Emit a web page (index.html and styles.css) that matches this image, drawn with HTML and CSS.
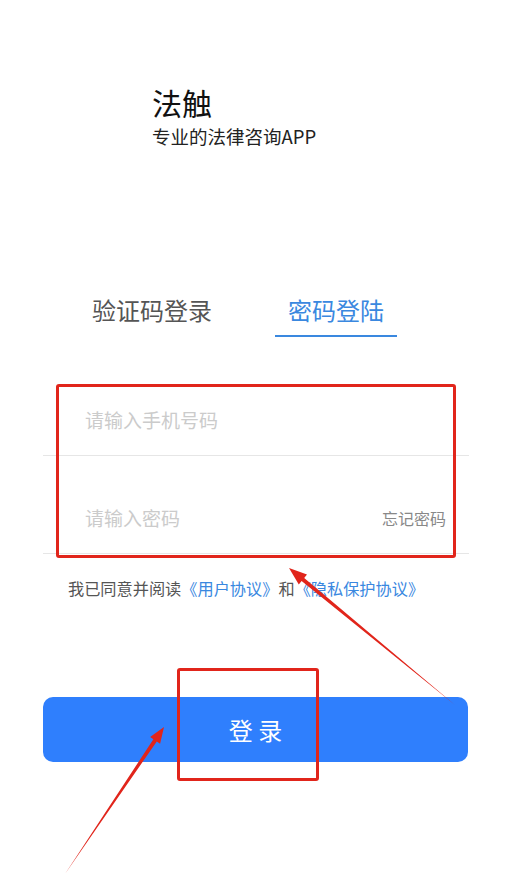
FILE: index.html
```html
<!DOCTYPE html>
<html>

<head>
  <meta charset="utf-8">
  <link rel="stylesheet" href="styles.css">
</head>

<body>
  <div class="screen">
    <header class="brand">
      <h1 class="brand-name">法触</h1>
      <p class="brand-slogan">专业的法律咨询APP</p>
    </header>

    <nav class="tabs">
      <span class="tab">验证码登录</span>
      <span class="tab active">密码登陆</span>
    </nav>

    <form class="login-form">
      <div class="field">
        <input class="field-input" type="tel" placeholder="请输入手机号码">
      </div>
      <div class="field">
        <input class="field-input" type="password" placeholder="请输入密码">
        <a class="forgot">忘记密码</a>
      </div>
    </form>

    <p class="agreement">我已同意并阅读<a class="link">《用户协议》</a>和<a class="link">《隐私保护协议》</a></p>

    <button class="submit" type="button">登 录</button>

    <!-- annotation marks drawn over the screenshot -->
    <div class="mark mark-fields"></div>
    <div class="mark mark-button"></div>
    <svg class="arrows" xmlns="http://www.w3.org/2000/svg" width="514" height="896">
      <polygon points="65,874 156.8,741.4 160.1,743.7 164,727 150.1,736.9 153.4,739.2" />
      <polygon points="455,705 304.2,578 307,574.5 289,568 298.8,584.5 301.6,581" />
    </svg>
  </div>
</body>

</html>
```

FILE: styles.css
```css
body {
  margin: 0;
  background-color: #fff;
  font-family: "Noto Sans CJK SC", "Noto Sans", sans-serif;
}

.screen {
  position: relative;
  width: 514px;
  height: 896px;
  overflow: hidden;
  padding: 0 45px 0 43px;
  box-sizing: border-box;
}

.brand {
  padding: 84px 0 0 109px;
}

.brand-name {
  margin: 0;
  font-size: 30px;
  line-height: 36px;
  font-weight: 400;
  color: #111;
}

.brand-slogan {
  margin: 5px 0 0;
  font-size: 18.5px;
  line-height: 22px;
  color: #222;
}

.tabs {
  display: flex;
  gap: 62px;
  margin-top: 147px;
  padding-left: 48px;
}

.tab {
  width: 122px;
  padding-bottom: 9px;
  border-bottom: 2px solid transparent;
  text-align: center;
  font-size: 24px;
  line-height: 32px;
  color: #555;
}

.tab.active {
  color: #3a88df;
  border-bottom-color: #3a88df;
}

.login-form {
  margin-top: 21px;
}

.field {
  display: flex;
  align-items: flex-start;
  height: 98px;
  padding: 50px 23px 0 42px;
  box-sizing: border-box;
  border-bottom: 1px solid #e6e6e6;
}

.field-input {
  flex: 1;
  min-width: 0;
  height: 24px;
  padding: 0;
  border: none;
  outline: none;
  background: transparent;
  font-family: inherit;
  font-size: 19px;
  line-height: 24px;
  color: #333;
}

.field-input::placeholder {
  color: #cbcbcb;
}

.forgot {
  font-size: 16px;
  line-height: 24px;
  color: #888;
}

.agreement {
  margin: 23px 0 0 25px;
  font-size: 16.2px;
  line-height: 22px;
  color: #555;
}

.link {
  color: #3a88df;
}

.submit {
  display: block;
  width: 425px;
  height: 65px;
  margin-top: 98px;
  border: none;
  border-radius: 10px;
  background-color: #2f7ffd;
  color: #fff;
  font-family: inherit;
  font-size: 24px;
}

.mark {
  position: absolute;
  border: 3px solid #e1251b;
  border-radius: 3px;
  box-sizing: border-box;
  pointer-events: none;
}

.mark-fields {
  left: 56px;
  top: 384px;
  width: 400px;
  height: 174px;
}

.mark-button {
  left: 177px;
  top: 668px;
  width: 142px;
  height: 113px;
}

.arrows {
  position: absolute;
  top: 0;
  left: 0;
  pointer-events: none;
  fill: #e1251b;
}
```
